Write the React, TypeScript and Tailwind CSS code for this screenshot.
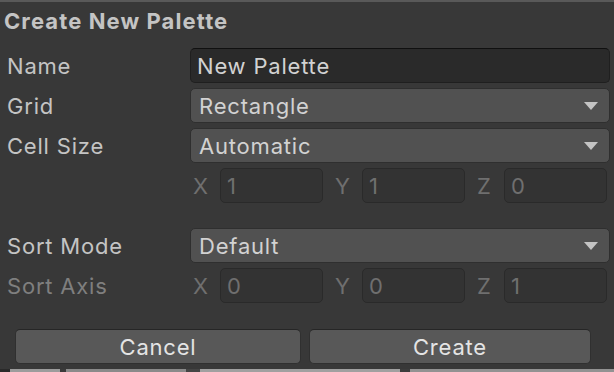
import React from 'react';

const font = { fontFamily: 'Inter, "Noto Sans", sans-serif' };

function Label({ children, disabled }: { children: React.ReactNode; disabled?: boolean }) {
  return (
    <div className={`w-[190px] shrink-0 pl-[7px] ${disabled ? 'text-[#7f7f7f]' : 'text-[#c4c4c4]'}`}>
      {children}
    </div>
  );
}

function Dropdown({ value }: { value: string }) {
  return (
    <div className="flex-1 h-[35px] flex items-center justify-between bg-[#515151] border border-[#2f2f2f] rounded-[5px] pl-[8px] pr-[11px] text-[#d2d2d2]">
      <span>{value}</span>
      <svg width="14" height="8" viewBox="0 0 14 8">
        <path d="M0 0 L14 0 L7 8 Z" fill="#c4c4c4" />
      </svg>
    </div>
  );
}

function Vec3({ values }: { values: string[] }) {
  const axes = ['X', 'Y', 'Z'];
  return (
    <div className="flex-1 flex gap-[9px] mr-[3px]">
      {axes.map((a, i) => (
        <div key={a} className="flex-1 flex items-center">
          <span className="w-[30px] shrink-0 pl-[3px] text-[#6f6f6f]">{a}</span>
          <div className="flex-1 h-[35px] flex items-center bg-[#333333] border border-[#2a2a2a] rounded-[5px] pl-[6px] text-[#6f6f6f]">
            {values[i]}
          </div>
        </div>
      ))}
    </div>
  );
}

export default function App() {
  return (
    <div className="w-[614px] h-[372px] bg-[#383838] flex flex-col text-[22px] tracking-[0.8px] leading-none overflow-hidden" style={font}>
      <div className="h-[2px] bg-[#595959]" />
      <div className="h-[38px] pl-[4px] pt-[8px] font-bold tracking-[1.1px] text-[#c4c4c4]">Create New Palette</div>

      <div className="flex flex-col gap-[5px] pr-[4px] mt-[8px]">
        <div className="flex items-center h-[35px]">
          <Label>Name</Label>
          <div className="flex-1 h-[35px] flex items-center bg-[#2a2a2a] border border-[#1f1f1f] border-t-[#101010] rounded-[5px] pl-[6px] text-[#d2d2d2]">
            New Palette
          </div>
        </div>
        <div className="flex items-center h-[35px]">
          <Label>Grid</Label>
          <Dropdown value="Rectangle" />
        </div>
        <div className="flex items-center h-[35px]">
          <Label>Cell Size</Label>
          <Dropdown value="Automatic" />
        </div>
        <div className="flex items-center h-[35px]">
          <Label>{''}</Label>
          <Vec3 values={['1', '1', '0']} />
        </div>
        <div className="h-[15px]" />
        <div className="flex items-center h-[35px]">
          <Label>Sort Mode</Label>
          <Dropdown value="Default" />
        </div>
        <div className="flex items-center h-[35px]">
          <Label disabled>Sort Axis</Label>
          <Vec3 values={['0', '0', '1']} />
        </div>
      </div>

      <div className="flex gap-[8px] pl-[15px] mt-[26px]">
        <button className="w-[286px] h-[35px] bg-[#585858] border border-[#303030] border-t-[#262626] rounded-[5px] text-[#e4e4e4]">
          Cancel
        </button>
        <button className="w-[282px] h-[35px] bg-[#585858] border border-[#303030] border-t-[#262626] rounded-[5px] text-[#e4e4e4]">
          Create
        </button>
      </div>

      <div className="mt-auto h-[3px] flex">
        <div className="w-[10px] bg-[#2a2a2a]" />
        <div className="w-[50px] bg-[#9c9c9c]" />
        <div className="w-[6px] bg-[#3a3a3a]" />
        <div className="w-[120px] bg-[#8a8a8a]" />
        <div className="w-[14px] bg-[#444444]" />
        <div className="w-[200px] bg-[#a0a0a0]" />
        <div className="w-[10px] bg-[#3c3c3c]" />
        <div className="flex-1 bg-[#929292]" />
      </div>
    </div>
  );
}
